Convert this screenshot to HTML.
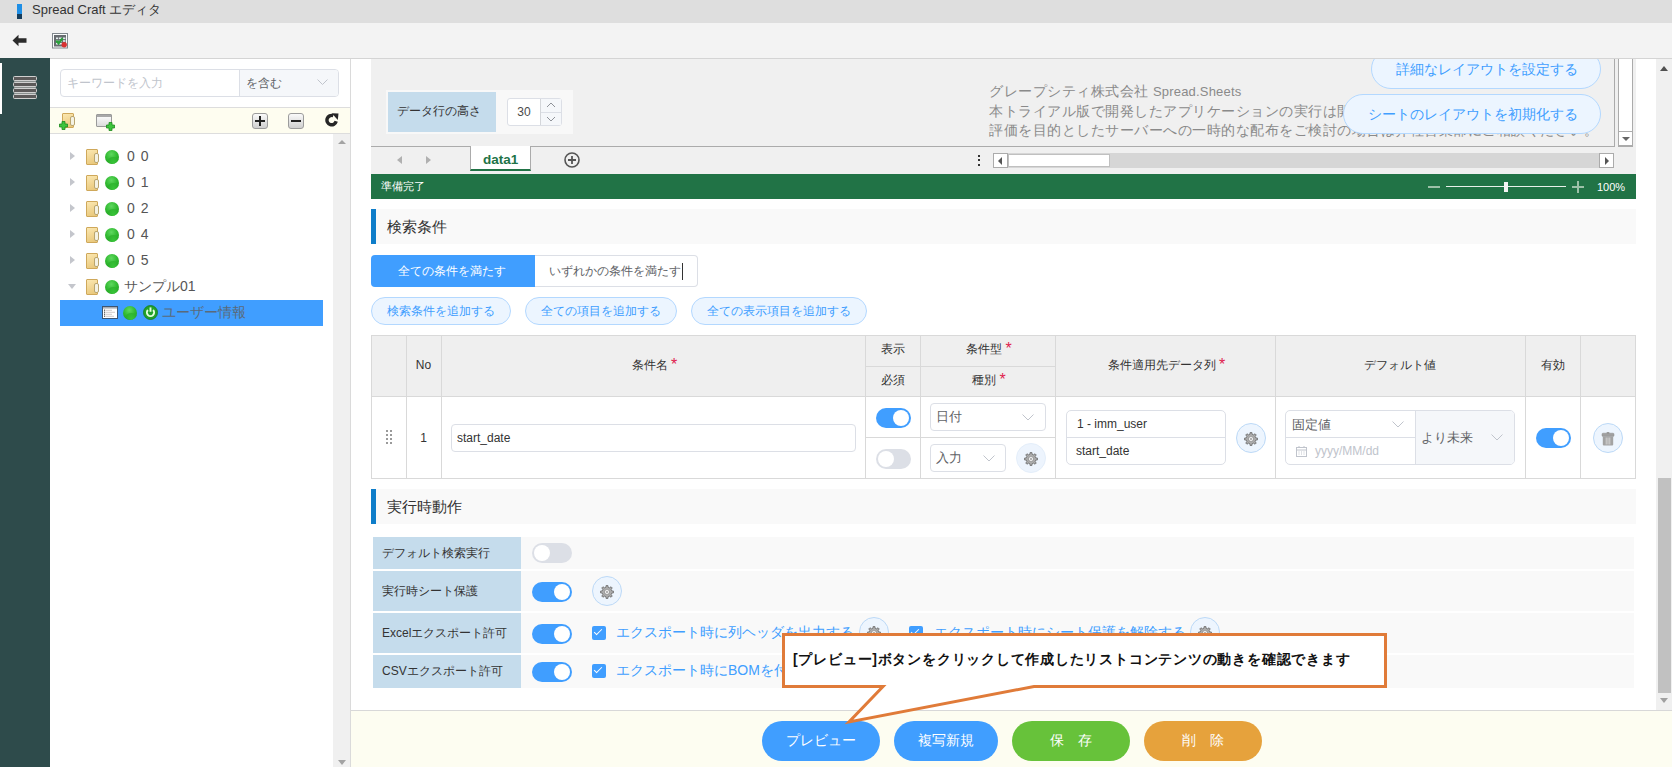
<!DOCTYPE html>
<html><head><meta charset="utf-8">
<style>
*{box-sizing:border-box;margin:0;padding:0}
html,body{width:1672px;height:767px;overflow:hidden;background:#fff;font-family:"Liberation Sans",sans-serif;color:#333;position:relative}
.a{position:absolute}
.t{position:absolute;white-space:nowrap;line-height:1}
.titlebar{left:0;top:0;width:1672px;height:23px;background:#dedede}
.toolbar{left:0;top:23px;width:1672px;height:36px;background:#f3f3f3;border-bottom:1px solid #d4d4d4}
.sidebar{left:0;top:58px;width:50px;height:709px;background:#2e4b4b}
.lpanel{left:50px;top:59px;width:301px;height:708px;background:#fff;border-right:1px solid #dadada}
.vscroll{left:1656px;top:59px;width:16px;height:651px;background:#f0f0f0}
.footer{left:351px;top:710px;width:1321px;height:57px;background:#fdfdf1;border-top:1px solid #d8d8d8}
.tri-r{width:0;height:0;border-top:4px solid transparent;border-bottom:4px solid transparent;border-left:5px solid #c4c6cc}
.tri-d{width:0;height:0;border-left:4px solid transparent;border-right:4px solid transparent;border-top:5px solid #c4c6cc}
.folder{width:12px;height:16px;border-radius:1px;background:linear-gradient(160deg,#fbe7b0,#e8c678);border:1px solid #cfa85a}
.folder:after{content:"";position:absolute;right:-2px;bottom:1px;width:3px;height:8px;border-radius:2px;background:#f4f2e4;border:1px solid #b9a56f;border-width:1px 1px 1px 0.5px}
.ball{width:14px;height:14px;border-radius:50%;background:radial-gradient(circle at 45% 30%,#5fd85f 0%,#33bb33 45%,#1f9f1f 85%,#188a18 100%);overflow:hidden}
.ball:after{content:"";position:absolute;left:3px;top:7px;width:11px;height:7px;border-radius:50%;background:radial-gradient(ellipse at 50% 100%,#3fcf3f,#2aae2a 80%);opacity:0.8}
.tree-txt{font-size:14px;color:#555;margin-top:-1px}
.tree-num{font-size:14px;word-spacing:2px}
.pill{height:28px;border:1px solid #b3d8ff;border-radius:14px;background:#ecf5ff;display:flex;align-items:center;justify-content:center;font-size:12px;color:#409eff;white-space:nowrap}
.vl{top:0;width:1px;height:142px;background:#d9d9d9}
.th{font-size:12px;color:#333;text-align:center}
.th i{font-style:normal;color:#e0234e;font-size:16px;position:relative;top:6px;left:3px;line-height:0;vertical-align:top}
.inp{border:1px solid #dcdfe6;border-radius:4px;background:#fff}
.tg{border-radius:10px;background:#dcdfe6}
.tg:after{content:"";position:absolute;left:2px;top:2px;width:16px;height:16px;border-radius:50%;background:#fff}
.tg.on{background:#409eff}
.tg.on:after{left:auto;right:2px}
.gear{width:30px;height:30px;border-radius:50%;border:1px solid #bcd9f7;background:#edf5fe}
.gear.dis{border-color:#e4eefa;background:#edf4fd}
.gear svg{position:absolute;left:7px;top:8px}
.srow{left:373px;width:1261px;background:#f9f9f9}
.lbl{position:absolute;left:0;top:0;width:148px;height:100%;background:#c5dcec;display:flex;align-items:center;padding-left:9px;font-size:12px;color:#333;white-space:nowrap}
.cb{width:14px;height:14px;border-radius:2px;background:#409eff}
.cb:after{content:"";position:absolute;left:4px;top:1px;width:3px;height:7px;border:solid #fff;border-width:0 1.5px 1.5px 0;transform:rotate(45deg)}
.link{font-size:14px;color:#409eff}
.fbtn{height:40px;border-radius:20px;display:flex;align-items:center;justify-content:center;font-size:14px;color:#fff;white-space:nowrap}
</style></head><body>
<!-- title bar -->
<div class="a titlebar">
  <div class="a" style="left:17px;top:4px;width:5px;height:10px;background:#1e8fe6"></div>
  <div class="a" style="left:17px;top:14px;width:5px;height:5px;background:#163d5c"></div>
  <div class="t" style="left:32px;top:3px;font-size:13px;color:#333">Spread Craft エディタ</div>
</div>
<!-- toolbar -->
<div class="a toolbar">
  <svg class="a" style="left:12px;top:11px" width="15" height="13" viewBox="0 0 15 13"><path d="M0.5 6.5 L6.5 0.8 L6.5 4.3 L14.5 4.3 L14.5 8.7 L6.5 8.7 L6.5 12.2 Z" fill="#2b2b2b"/></svg>
  <svg class="a" style="left:52px;top:10px" width="17" height="16" viewBox="0 0 17 16">
    <rect x="0.5" y="0.5" width="15" height="14.5" fill="#fbfdfd" stroke="#80878c"/>
    <rect x="2" y="2" width="12" height="11.5" fill="#676c70"/>
    <g fill="#e6eeee"><rect x="4" y="4.5" width="2.2" height="1.6"/><rect x="7" y="4.5" width="3" height="1.6"/><rect x="11" y="4.5" width="2.4" height="1.6"/><rect x="4" y="7.2" width="2.2" height="1.6"/><rect x="7" y="7.2" width="3" height="1.6"/><rect x="11" y="7.2" width="2.4" height="1.6"/><rect x="4" y="9.9" width="2.2" height="1.6"/><rect x="7" y="9.9" width="3" height="1.6"/></g>
    <path d="M4.2 7.6 L6.6 10.2 L10.6 5.2" stroke="#29a03a" stroke-width="2.3" fill="none"/>
    <circle cx="12.2" cy="11.8" r="2.7" fill="#d83232"/>
  </svg>
</div>
<!-- sidebar -->
<div class="a sidebar">
  <div class="a" style="left:0;top:5px;width:2px;height:51px;background:#fff"></div>
  <div class="a" style="left:14px;top:19px;width:22px;height:22px;background:#8b9190"></div><div class="a" style="left:13px;top:18px;width:24px;height:5px;border:1px solid #d0d0d0;background:#5c5a5a;border-radius:1.5px"></div><div class="a" style="left:13px;top:24px;width:24px;height:5px;border:1px solid #d0d0d0;background:#5c5a5a;border-radius:1.5px"></div><div class="a" style="left:13px;top:30px;width:24px;height:5px;border:1px solid #d0d0d0;background:#5c5a5a;border-radius:1.5px"></div><div class="a" style="left:13px;top:36px;width:24px;height:5px;border:1px solid #d0d0d0;background:#5c5a5a;border-radius:1.5px"></div>
</div>
<!-- left panel -->
<div class="a lpanel">
  <div class="a" style="left:10px;top:10px;width:279px;height:28px;border:1px solid #dcdfe6;border-radius:4px;background:#fff;overflow:hidden">
    <div class="t" style="left:6px;top:7px;font-size:12px;color:#c0c4cc">キーワードを入力</div>
    <div class="a" style="left:178px;top:0;width:101px;height:26px;background:#f5f7fa;border-left:1px solid #dcdfe6">
      <div class="t" style="left:6px;top:7px;font-size:12px;color:#606266">を含む</div>
      <svg class="a" style="left:77px;top:9px" width="11" height="7" viewBox="0 0 11 7"><path d="M0.5 0.5 L5.5 5.5 L10.5 0.5" stroke="#c0c4cc" fill="none" stroke-width="1"/></svg>
    </div>
  </div>
  <div class="a" style="left:0;top:48px;width:300px;height:27px;background:#fefdf0;border-top:1px solid #ddd;border-bottom:1px solid #ddd">
    <!-- folder add -->
    <div class="a folder" style="left:12px;top:5px;width:12px;height:15px"></div>
    <svg class="a" style="left:9px;top:13px" width="9" height="9" viewBox="0 0 9 9"><path d="M3 0.5h3v2.5h2.5v3h-2.5v2.5h-3v-2.5h-2.5v-3h2.5z" fill="#3ec43e" stroke="#1d8a1d" stroke-width="0.8"/></svg>
    <!-- window add -->
    <div class="a" style="left:46px;top:6px;width:16px;height:13px;border:1px solid #9a9a9a;border-radius:1px;background:linear-gradient(#fff,#dcdcdc)"><div class="a" style="left:0;top:0;width:14px;height:2px;background:#a8a8a8"></div></div>
    <svg class="a" style="left:56px;top:14px" width="9" height="9" viewBox="0 0 9 9"><path d="M3 0.5h3v2.5h2.5v3h-2.5v2.5h-3v-2.5h-2.5v-3h2.5z" fill="#3ec43e" stroke="#1d8a1d" stroke-width="0.8"/></svg>
    <!-- plus/minus buttons -->
    <div class="a" style="left:202px;top:5px;width:16px;height:16px;border:1px solid #9c9c9c;border-radius:3px;background:linear-gradient(#fafafa,#cfcfcf)">
      <div class="a" style="left:2px;top:6px;width:10px;height:2px;background:#222"></div><div class="a" style="left:6px;top:2px;width:2px;height:10px;background:#222"></div></div>
    <div class="a" style="left:238px;top:5px;width:16px;height:16px;border:1px solid #9c9c9c;border-radius:3px;background:linear-gradient(#fafafa,#cfcfcf)">
      <div class="a" style="left:2px;top:6px;width:10px;height:2px;background:#222"></div></div>
    <svg class="a" style="left:275px;top:5px" width="15" height="15" viewBox="0 0 15 15"><path d="M11.2 8.3 A4.7 4.7 0 1 1 8.3 2.7" stroke="#262626" stroke-width="3.4" fill="none"/><path d="M6.8 0.2 L13.5 0.6 L12.8 7 Z" fill="#262626"/></svg>
  </div>
  <!-- scrollbar -->
  <div class="a" style="left:283px;top:75px;width:17px;height:633px;background:#f0f0f0">
    <div class="a" style="left:5px;top:6px;width:0;height:0;border-left:4px solid transparent;border-right:4px solid transparent;border-bottom:4px solid #a3a3a3"></div>
    <div class="a" style="left:5px;top:626px;width:0;height:0;border-left:4px solid transparent;border-right:4px solid transparent;border-top:5px solid #a3a3a3"></div>
  </div>
  <!-- tree rows -->
  <div class="a tri-r" style="left:20px;top:93px"></div><div class="a folder" style="left:36px;top:90px"></div><div class="a ball" style="left:55px;top:91px"></div><div class="t tree-txt tree-num" style="left:77px;top:91px">0 0</div>
  <div class="a tri-r" style="left:20px;top:119px"></div><div class="a folder" style="left:36px;top:116px"></div><div class="a ball" style="left:55px;top:117px"></div><div class="t tree-txt tree-num" style="left:77px;top:117px">0 1</div>
  <div class="a tri-r" style="left:20px;top:145px"></div><div class="a folder" style="left:36px;top:142px"></div><div class="a ball" style="left:55px;top:143px"></div><div class="t tree-txt tree-num" style="left:77px;top:143px">0 2</div>
  <div class="a tri-r" style="left:20px;top:171px"></div><div class="a folder" style="left:36px;top:168px"></div><div class="a ball" style="left:55px;top:169px"></div><div class="t tree-txt tree-num" style="left:77px;top:169px">0 4</div>
  <div class="a tri-r" style="left:20px;top:197px"></div><div class="a folder" style="left:36px;top:194px"></div><div class="a ball" style="left:55px;top:195px"></div><div class="t tree-txt tree-num" style="left:77px;top:195px">0 5</div>
  <div class="a tri-d" style="left:18px;top:225px"></div><div class="a folder" style="left:36px;top:220px"></div><div class="a ball" style="left:55px;top:221px"></div><div class="t tree-txt" style="left:74px;top:221px">サンプル01</div>
  <div class="a" style="left:10px;top:241px;width:263px;height:26px;background:#409eff"></div>
  <svg class="a" style="left:52px;top:247px" width="16" height="13" viewBox="0 0 16 13"><rect x="0.5" y="0.5" width="15" height="12" fill="#fff" stroke="#3f5570"/><rect x="1" y="1" width="14" height="1.6" fill="#a9adb3"/><g fill="#4a4a4a"><rect x="2" y="3.6" width="1.2" height="1.2"/><rect x="2" y="5.6" width="1.2" height="1.2"/><rect x="2" y="7.6" width="1.2" height="1.2"/><rect x="2" y="9.6" width="1.2" height="1.2"/></g><g fill="#c9c2c2"><rect x="4" y="3.8" width="6" height="0.9"/><rect x="4" y="5.8" width="9" height="0.9"/><rect x="4" y="7.8" width="6" height="0.9"/><rect x="4" y="9.8" width="8" height="0.9"/></g></svg>
  <div class="a ball" style="left:73px;top:247px"></div>
  <svg class="a" style="left:93px;top:246px" width="15" height="15" viewBox="0 0 15 15"><circle cx="7.5" cy="7.5" r="7" fill="#22a22a" stroke="#157a1e" stroke-width="0.8"/><path d="M4.9 5 A3.6 3.6 0 1 0 10.1 5" stroke="#e6ffe0" stroke-width="1.9" fill="none"/><path d="M7.5 2.4 V6.8" stroke="#e6ffe0" stroke-width="1.9"/></svg>
  <div class="t tree-txt" style="left:112px;top:247px;color:#5a6a7a">ユーザー情報</div>
</div>
<!-- spreadsheet area -->
<div class="a" style="left:371px;top:59px;width:1265px;height:115px;background:#f0f0f0;overflow:hidden">
  <!-- sheet viewport -->
  <div class="a" style="left:0;top:0;width:1244px;height:88px;border-right:1px solid #ababab;border-bottom:1px solid #ababab;overflow:hidden">
    <div class="a" style="left:15px;top:31px;width:187px;height:44px;background:#f8f8f8"></div>
    <div class="a" style="left:17px;top:33px;width:108px;height:40px;background:#c5dcec"></div>
    <div class="t" style="left:26px;top:46px;font-size:12px;color:#333">データ行の高さ</div>
    <div class="a" style="left:136px;top:39px;width:55px;height:28px;border:1px solid #dcdfe6;border-radius:3px;background:#fff">
      <div class="t" style="left:0;top:7px;width:32px;text-align:center;font-size:12px;color:#4a4a4a">30</div>
      <div class="a" style="left:32px;top:0;width:21px;height:26px;border-left:1px solid #d4d6da;background:#f5f7fa">
        <div class="a" style="left:0;top:13px;width:20px;height:1px;background:#dcdfe6"></div>
        <svg class="a" style="left:5px;top:3px" width="10" height="6" viewBox="0 0 10 6"><path d="M1 5 L5 1 L9 5" stroke="#909399" fill="none"/></svg>
        <svg class="a" style="left:5px;top:17px" width="10" height="6" viewBox="0 0 10 6"><path d="M1 1 L5 5 L9 1" stroke="#909399" fill="none"/></svg>
      </div>
    </div>
    <div class="t" style="left:618px;top:23px;font-size:14px;letter-spacing:0.5px;color:#8a8a8a;line-height:19.5px">グレープシティ株式会社 <span style="font-size:13px;letter-spacing:0.2px">Spread.Sheets</span><br>本トライアル版で開発したアプリケーションの実行は開発環境に限定されています。<br>評価を目的としたサーバーへの一時的な配布をご検討の場合は弊社営業部にご相談ください。</div>
    <div class="a" style="left:1000px;top:-10px;width:230px;height:40px;border:1px solid #b3d8ff;border-radius:20px;background:#ecf5ff"></div>
    <div class="t" style="left:1025px;top:3px;font-size:14px;color:#409eff">詳細なレイアウトを設定する</div>
    <div class="a" style="left:972px;top:35px;width:258px;height:40px;border:1px solid #b3d8ff;border-radius:20px;background:#ecf5ff"></div>
    <div class="t" style="left:997px;top:48px;font-size:14px;color:#409eff">シートのレイアウトを初期化する</div>
  </div>
  <!-- sheet vscroll -->
  <div class="a" style="left:1247px;top:0;width:15px;height:88px;background:#fff;border:1px solid #ababab;border-top:none">
    <div class="a" style="left:-1px;top:72px;width:15px;height:15px;border:1px solid #ababab;background:#fff">
      <div class="a" style="left:3px;top:5px;width:0;height:0;border-left:4px solid transparent;border-right:4px solid transparent;border-top:4px solid #666"></div>
    </div>
  </div>
  <!-- tab strip -->
    <div class="a" style="left:26px;top:97px;width:0;height:0;border-top:4px solid transparent;border-bottom:4px solid transparent;border-right:5px solid #b0b0b0"></div>
  <div class="a" style="left:55px;top:97px;width:0;height:0;border-top:4px solid transparent;border-bottom:4px solid transparent;border-left:5px solid #b0b0b0"></div>
  <div class="a" style="left:99px;top:87px;width:61px;height:25px;background:#fff;border-left:1px solid #ababab;border-right:1px solid #ababab;border-bottom:2px solid #217346">
    <div class="t" style="left:12px;top:7px;font-size:13.5px;font-weight:bold;color:#217346">data1</div>
  </div>
  <svg class="a" style="left:193px;top:93px" width="16" height="16" viewBox="0 0 16 16"><circle cx="8" cy="8" r="7" stroke="#555" stroke-width="1.6" fill="none"/><path d="M8 4v8M4 8h8" stroke="#555" stroke-width="1.8"/></svg>
  <!-- hscroll -->
  <div class="a" style="left:607px;top:96px;width:2px;height:2px;background:#333"></div><div class="a" style="left:607px;top:100px;width:2px;height:2px;background:#333"></div><div class="a" style="left:607px;top:105px;width:2px;height:2px;background:#333"></div>
  <div class="a" style="left:622px;top:94px;width:621px;height:15px;background:#d6d6d6"></div>
  <div class="a" style="left:622px;top:94px;width:15px;height:15px;background:#fff;border:1px solid #ababab">
    <div class="a" style="left:4px;top:3px;width:0;height:0;border-top:4px solid transparent;border-bottom:4px solid transparent;border-right:4px solid #555"></div></div>
  <div class="a" style="left:637px;top:95px;width:102px;height:13px;background:#fff;border:1px solid #c0c0c0"></div>
  <div class="a" style="left:1228px;top:94px;width:15px;height:15px;background:#fff;border:1px solid #ababab">
    <div class="a" style="left:5px;top:3px;width:0;height:0;border-top:4px solid transparent;border-bottom:4px solid transparent;border-left:4px solid #555"></div></div>
</div>
<!-- status bar -->
<div class="a" style="left:371px;top:174px;width:1265px;height:25px;background:#217346">
  <div class="t" style="left:10px;top:7px;font-size:11px;color:#fff">準備完了</div>
  <div class="a" style="left:1057px;top:12px;width:12px;height:2px;background:#9cc1a8"></div>
  <div class="a" style="left:1075px;top:12px;width:120px;height:1px;background:#e8f0ea"></div>
  <div class="a" style="left:1133px;top:8px;width:4px;height:10px;background:#f4f4f4"></div>
  <div class="a" style="left:1201px;top:12px;width:12px;height:2px;background:#9cc1a8"></div>
  <div class="a" style="left:1206px;top:7px;width:2px;height:12px;background:#9cc1a8"></div>
  <div class="t" style="left:1226px;top:8px;font-size:11px;color:#fff">100%</div>
</div>
<!-- section: 検索条件 -->
<div class="a" style="left:371px;top:209px;width:1265px;height:35px;background:#f9f9f9;border-left:5px solid #0e7dc9">
  <div class="t" style="left:11px;top:10px;font-size:15px;color:#333">検索条件</div>
</div>
<div class="a" style="left:371px;top:255px;width:164px;height:32px;background:#409eff;border-radius:4px 0 0 4px"><div class="t" style="left:27px;top:10px;font-size:12px;color:#fff">全ての条件を満たす</div></div>
<div class="a" style="left:535px;top:255px;width:163px;height:32px;border:1px solid #dcdfe6;border-left:none;border-radius:0 4px 4px 0;background:#fff"><div class="t" style="left:14px;top:9px;font-size:12px;color:#606266">いずれかの条件を満たす</div><div class="a" style="left:147px;top:7px;width:1px;height:17px;background:#333"></div></div>
<div class="a pill" style="left:371px;top:297px;width:140px"><span>検索条件を追加する</span></div>
<div class="a pill" style="left:525px;top:297px;width:152px"><span>全ての項目を追加する</span></div>
<div class="a pill" style="left:691px;top:297px;width:176px"><span>全ての表示項目を追加する</span></div>

<!-- table -->
<div class="a" style="left:371px;top:335px;width:1265px;height:144px;border:1px solid #d9d9d9;background:#fff">
  <div class="a" style="left:0;top:0;width:1263px;height:61px;background:#efefef;border-bottom:1px solid #d9d9d9"></div>
  <div class="a vl" style="left:34px"></div>
  <div class="a vl" style="left:69px"></div>
  <div class="a vl" style="left:493px"></div>
  <div class="a vl" style="left:548px"></div>
  <div class="a vl" style="left:683px"></div>
  <div class="a vl" style="left:903px"></div>
  <div class="a vl" style="left:1153px"></div>
  <div class="a vl" style="left:1208px"></div>
  <div class="a" style="left:493px;top:30px;width:190px;height:1px;background:#d9d9d9"></div>
  <div class="a" style="left:493px;top:101px;width:190px;height:1px;background:#d9d9d9"></div>
  <!-- header texts -->
  <div class="t th" style="left:34px;top:23px;width:35px">No</div>
  <div class="t th" style="left:69px;top:23px;width:424px">条件名<i>*</i></div>
  <div class="t th" style="left:493px;top:7px;width:55px">表示</div>
  <div class="t th" style="left:493px;top:38px;width:55px">必須</div>
  <div class="t th" style="left:548px;top:7px;width:135px">条件型<i>*</i></div>
  <div class="t th" style="left:548px;top:38px;width:135px">種別<i>*</i></div>
  <div class="t th" style="left:683px;top:23px;width:220px">条件適用先データ列<i>*</i></div>
  <div class="t th" style="left:903px;top:23px;width:250px">デフォルト値</div>
  <div class="t th" style="left:1153px;top:23px;width:55px">有効</div>
  <!-- body -->
  <svg class="a" style="left:14px;top:94px" width="7" height="15" viewBox="0 0 7 15"><g fill="#9a9a9a"><rect x="0" y="0" width="2" height="2"/><rect x="4" y="0" width="2" height="2"/><rect x="0" y="4" width="2" height="2"/><rect x="4" y="4" width="2" height="2"/><rect x="0" y="8" width="2" height="2"/><rect x="4" y="8" width="2" height="2"/><rect x="0" y="12" width="2" height="2"/><rect x="4" y="12" width="2" height="2"/></g></svg>
  <div class="t th" style="left:34px;top:96px;width:35px">1</div>
  <div class="a inp" style="left:79px;top:88px;width:405px;height:28px"><div class="t" style="left:5px;top:7px;font-size:12px;color:#333">start_date</div></div>
  <div class="a tg on" style="left:504px;top:72px;width:35px;height:20px"></div>
  <div class="a tg" style="left:504px;top:113px;width:35px;height:20px"></div>
  <div class="a inp" style="left:558px;top:67px;width:116px;height:28px"><div class="t" style="left:5px;top:6px;font-size:13px;color:#606266">日付</div><svg class="a" style="left:91px;top:10px" width="12" height="7" viewBox="0 0 12 7"><path d="M0.5 0.5 L6 6 L11.5 0.5" stroke="#c0c4cc" fill="none"/></svg></div>
  <div class="a inp" style="left:558px;top:108px;width:76px;height:28px"><div class="t" style="left:5px;top:6px;font-size:13px;color:#606266">入力</div><svg class="a" style="left:52px;top:10px" width="12" height="7" viewBox="0 0 12 7"><path d="M0.5 0.5 L6 6 L11.5 0.5" stroke="#c0c4cc" fill="none"/></svg></div>
  <div class="a gear dis" style="left:644px;top:107px"><svg width="14" height="14" viewBox="0 0 14 14"><path d="M11.78 5.93 L13.55 6.17 L13.55 7.83 L11.78 8.07 L11.14 9.63 L12.22 11.05 L11.05 12.22 L9.63 11.14 L8.07 11.78 L7.83 13.55 L6.17 13.55 L5.93 11.78 L4.37 11.14 L2.95 12.22 L1.78 11.05 L2.86 9.63 L2.22 8.07 L0.45 7.83 L0.45 6.17 L2.22 5.93 L2.86 4.37 L1.78 2.95 L2.95 1.78 L4.37 2.86 L5.93 2.22 L6.17 0.45 L7.83 0.45 L8.07 2.22 L9.63 2.86 L11.05 1.78 L12.22 2.95 L11.14 4.37 Z" fill="#acacac" stroke="#6f6f6f" stroke-width="0.9"/><circle cx="7" cy="7" r="2.4" fill="#fff" stroke="#777" stroke-width="0.6"/><circle cx="7" cy="7" r="1" fill="#999"/></svg></div>
  <div class="a inp" style="left:694px;top:74px;width:160px;height:55px;border-radius:5px">
    <div class="a" style="left:0;top:26px;width:158px;height:1px;background:#dcdfe6"></div>
    <div class="t" style="left:10px;top:7px;font-size:12px;color:#333">1 - imm_user</div>
    <div class="t" style="left:9px;top:34px;font-size:12px;color:#333">start_date</div>
  </div>
  <div class="a gear" style="left:864px;top:87px"><svg width="14" height="14" viewBox="0 0 14 14"><path d="M11.78 5.93 L13.55 6.17 L13.55 7.83 L11.78 8.07 L11.14 9.63 L12.22 11.05 L11.05 12.22 L9.63 11.14 L8.07 11.78 L7.83 13.55 L6.17 13.55 L5.93 11.78 L4.37 11.14 L2.95 12.22 L1.78 11.05 L2.86 9.63 L2.22 8.07 L0.45 7.83 L0.45 6.17 L2.22 5.93 L2.86 4.37 L1.78 2.95 L2.95 1.78 L4.37 2.86 L5.93 2.22 L6.17 0.45 L7.83 0.45 L8.07 2.22 L9.63 2.86 L11.05 1.78 L12.22 2.95 L11.14 4.37 Z" fill="#acacac" stroke="#6f6f6f" stroke-width="0.9"/><circle cx="7" cy="7" r="2.4" fill="#fff" stroke="#777" stroke-width="0.6"/><circle cx="7" cy="7" r="1" fill="#999"/></svg></div>
  <div class="a inp" style="left:913px;top:74px;width:230px;height:55px;border-radius:5px;overflow:hidden">
    <div class="a" style="left:129px;top:0;width:100px;height:53px;background:#f5f7fa;border-left:1px solid #dcdfe6"></div>
    <div class="a" style="left:0;top:26px;width:129px;height:1px;background:#dcdfe6"></div>
    <div class="t" style="left:6px;top:7px;font-size:13px;color:#606266">固定値</div>
    <svg class="a" style="left:106px;top:10px" width="12" height="7" viewBox="0 0 12 7"><path d="M0.5 0.5 L6 6 L11.5 0.5" stroke="#c0c4cc" fill="none"/></svg>
    <svg class="a" style="left:10px;top:35px" width="11" height="11" viewBox="0 0 11 11"><rect x="0.5" y="1.5" width="10" height="9" fill="none" stroke="#c0c4cc"/><path d="M0.5 4h10" stroke="#c0c4cc"/><path d="M3 0v2M8 0v2" stroke="#c0c4cc"/><path d="M2.5 6h1M5 6h1M7.5 6h1M2.5 8h1M5 8h1M7.5 8h1" stroke="#c0c4cc"/></svg>
    <div class="t" style="left:29px;top:34px;font-size:12px;color:#c0c4cc">yyyy/MM/dd</div>
    <div class="t" style="left:135px;top:20px;font-size:13px;color:#606266">より未来</div>
    <svg class="a" style="left:205px;top:23px" width="12" height="7" viewBox="0 0 12 7"><path d="M0.5 0.5 L6 6 L11.5 0.5" stroke="#c0c4cc" fill="none"/></svg>
  </div>
  <div class="a tg on" style="left:1164px;top:92px;width:35px;height:20px"></div>
  <div class="a gear trash" style="left:1221px;top:87px"><svg width="14" height="14" viewBox="0 0 14 14"><rect x="5.5" y="0" width="3" height="2" rx="1" fill="#9a9a9a"/><rect x="1" y="1.2" width="12" height="3.2" rx="1" fill="#a0a0a0" stroke="#8a8a8a" stroke-width="0.5"/><path d="M1.8 4.4 H12.2 V12.6 Q12.2 13.6 11.2 13.6 H2.8 Q1.8 13.6 1.8 12.6 Z" fill="#a3a3a3"/><path d="M5.2 5.5v7M7 5.5v7M8.8 5.5v7" stroke="#d9d9d9" stroke-width="0.9"/></svg></div>
</div>

<!-- section: 実行時動作 -->
<div class="a" style="left:371px;top:489px;width:1265px;height:35px;background:#f9f9f9;border-left:5px solid #0e7dc9">
  <div class="t" style="left:11px;top:10px;font-size:15px;color:#333">実行時動作</div>
</div>
<div class="a srow" style="top:537px;height:32px"><div class="lbl"><span>デフォルト検索実行</span></div></div>
<div class="a srow" style="top:571px;height:40px"><div class="lbl"><span>実行時シート保護</span></div></div>
<div class="a srow" style="top:613px;height:40px"><div class="lbl"><span>Excelエクスポート許可</span></div></div>
<div class="a srow" style="top:655px;height:33px"><div class="lbl"><span>CSVエクスポート許可</span></div></div>
<div class="a tg" style="left:532px;top:543px;width:40px;height:20px"></div>
<div class="a tg on" style="left:532px;top:582px;width:40px;height:20px"></div>
<div class="a tg on" style="left:532px;top:624px;width:40px;height:20px"></div>
<div class="a tg on" style="left:532px;top:662px;width:40px;height:20px"></div>
<div class="a gear" style="left:592px;top:576px"><svg width="14" height="14" viewBox="0 0 14 14"><path d="M11.78 5.93 L13.55 6.17 L13.55 7.83 L11.78 8.07 L11.14 9.63 L12.22 11.05 L11.05 12.22 L9.63 11.14 L8.07 11.78 L7.83 13.55 L6.17 13.55 L5.93 11.78 L4.37 11.14 L2.95 12.22 L1.78 11.05 L2.86 9.63 L2.22 8.07 L0.45 7.83 L0.45 6.17 L2.22 5.93 L2.86 4.37 L1.78 2.95 L2.95 1.78 L4.37 2.86 L5.93 2.22 L6.17 0.45 L7.83 0.45 L8.07 2.22 L9.63 2.86 L11.05 1.78 L12.22 2.95 L11.14 4.37 Z" fill="#acacac" stroke="#6f6f6f" stroke-width="0.9"/><circle cx="7" cy="7" r="2.4" fill="#fff" stroke="#777" stroke-width="0.6"/><circle cx="7" cy="7" r="1" fill="#999"/></svg></div>
<div class="a cb" style="left:592px;top:626px"></div>
<div class="t link" style="left:616px;top:625px">エクスポート時に列ヘッダを出力する</div>
<div class="a gear" style="left:859px;top:617px"><svg width="14" height="14" viewBox="0 0 14 14"><path d="M11.78 5.93 L13.55 6.17 L13.55 7.83 L11.78 8.07 L11.14 9.63 L12.22 11.05 L11.05 12.22 L9.63 11.14 L8.07 11.78 L7.83 13.55 L6.17 13.55 L5.93 11.78 L4.37 11.14 L2.95 12.22 L1.78 11.05 L2.86 9.63 L2.22 8.07 L0.45 7.83 L0.45 6.17 L2.22 5.93 L2.86 4.37 L1.78 2.95 L2.95 1.78 L4.37 2.86 L5.93 2.22 L6.17 0.45 L7.83 0.45 L8.07 2.22 L9.63 2.86 L11.05 1.78 L12.22 2.95 L11.14 4.37 Z" fill="#acacac" stroke="#6f6f6f" stroke-width="0.9"/><circle cx="7" cy="7" r="2.4" fill="#fff" stroke="#777" stroke-width="0.6"/><circle cx="7" cy="7" r="1" fill="#999"/></svg></div>
<div class="a cb" style="left:909px;top:626px"></div>
<div class="t link" style="left:934px;top:625px">エクスポート時にシート保護を解除する</div>
<div class="a gear" style="left:1190px;top:617px"><svg width="14" height="14" viewBox="0 0 14 14"><path d="M11.78 5.93 L13.55 6.17 L13.55 7.83 L11.78 8.07 L11.14 9.63 L12.22 11.05 L11.05 12.22 L9.63 11.14 L8.07 11.78 L7.83 13.55 L6.17 13.55 L5.93 11.78 L4.37 11.14 L2.95 12.22 L1.78 11.05 L2.86 9.63 L2.22 8.07 L0.45 7.83 L0.45 6.17 L2.22 5.93 L2.86 4.37 L1.78 2.95 L2.95 1.78 L4.37 2.86 L5.93 2.22 L6.17 0.45 L7.83 0.45 L8.07 2.22 L9.63 2.86 L11.05 1.78 L12.22 2.95 L11.14 4.37 Z" fill="#acacac" stroke="#6f6f6f" stroke-width="0.9"/><circle cx="7" cy="7" r="2.4" fill="#fff" stroke="#777" stroke-width="0.6"/><circle cx="7" cy="7" r="1" fill="#999"/></svg></div>
<div class="a cb" style="left:592px;top:664px"></div>
<div class="t link" style="left:616px;top:663px">エクスポート時にBOMを付与する</div>

<!-- footer -->
<div class="a footer">
  <div class="a fbtn" style="left:411px;top:10px;width:118px;background:#409eff"><span>プレビュー</span></div>
  <div class="a fbtn" style="left:543px;top:10px;width:104px;background:#409eff"><span>複写新規</span></div>
  <div class="a fbtn" style="left:661px;top:10px;width:118px;background:#67c23a"><span>保　存</span></div>
  <div class="a fbtn" style="left:793px;top:10px;width:118px;background:#e6a23c"><span>削　除</span></div>
</div>
<div class="a vscroll">
  <div class="a" style="left:4px;top:7px;width:0;height:0;border-left:4px solid transparent;border-right:4px solid transparent;border-bottom:5px solid #505050"></div>
  <div class="a" style="left:2px;top:419px;width:13px;height:215px;background:#c1c1c1"></div>
  <div class="a" style="left:4px;top:639px;width:0;height:0;border-left:4px solid transparent;border-right:4px solid transparent;border-top:5px solid #a0a0a0"></div>
</div>

<!-- callout -->
<svg class="a" style="left:0;top:0" width="1672" height="767" viewBox="0 0 1672 767">
  <path d="M783.5 634.5 H1385.5 V686.5 H1034 L849 722 L883 686.5 H783.5 Z" fill="#fff" stroke="#e07b39" stroke-width="3" stroke-linejoin="miter"/>
</svg>
<div class="t" style="left:793px;top:652px;font-size:14px;font-weight:bold;color:#111;letter-spacing:0.77px">[プレビュー]ボタンをクリックして作成したリストコンテンツの動きを確認できます</div>
</body></html>
